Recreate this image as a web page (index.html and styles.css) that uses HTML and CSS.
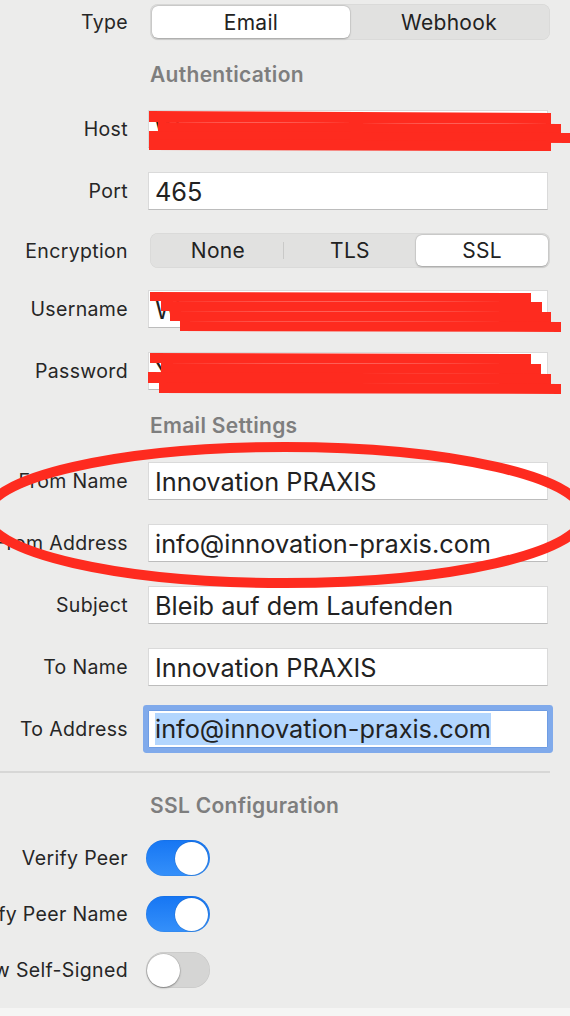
FILE: index.html
```html
<!DOCTYPE html>
<html lang="de">
<head>
<meta charset="utf-8">
<title>Email settings</title>
<link rel="stylesheet" href="styles.css">
</head>
<body>
<main class="panel">
  <section class="form">
    <div class="label">Type</div>
    <div class="seg seg-type">
      <span class="seg-item selected">Email</span>
      <span class="seg-item">Webhook</span>
    </div>

    <div class="section-title title-auth">Authentication</div>

    <div class="label">Host</div>
    <div class="field">W</div>

    <div class="label">Port</div>
    <div class="field">465</div>

    <div class="label row-enc">Encryption</div>
    <div class="seg seg-enc row-enc">
      <span class="seg-item sep-after">None</span>
      <span class="seg-item">TLS</span>
      <span class="seg-item selected">SSL</span>
    </div>

    <div class="label">Username</div>
    <div class="field">W</div>

    <div class="label">Password</div>
    <div class="field">Y</div>

    <div class="section-title title-email">Email Settings</div>

    <div class="label">From Name</div>
    <div class="field">Innovation PRAXIS</div>

    <div class="label">From Address</div>
    <div class="field">info@innovation-praxis.com</div>

    <div class="label">Subject</div>
    <div class="field">Bleib auf dem Laufenden</div>

    <div class="label">To Name</div>
    <div class="field">Innovation PRAXIS</div>

    <div class="label">To Address</div>
    <div class="field focused"><span class="selection">info@innovation-praxis.com</span></div>
  </section>

  <hr class="divider">

  <section class="form ssl">
    <div class="section-title title-ssl">SSL Configuration</div>

    <div class="label">Verify Peer</div>
    <div class="toggle on"><span class="knob"></span></div>

    <div class="label">Verify Peer Name</div>
    <div class="toggle on"><span class="knob"></span></div>

    <div class="label">Allow Self-Signed</div>
    <div class="toggle"><span class="knob"></span></div>
  </section>
</main>
<footer class="strip"></footer>

<svg class="marks" width="570" height="1016" viewBox="0 0 570 1016" aria-hidden="true">
  <g fill="#fe2b1f">
    <polygon points="149,111 551,113 551,124 149,122"/>
    <polygon points="158,122 561,124 561,134 158,132"/>
    <polygon points="149,131 570,133 570,143 149,141"/>
    <polygon points="149,139 551,141 551,151 149,150"/>

    <polygon points="150,292 531,293 531,302 150,301"/>
    <polygon points="161,301 542,302 542,312 161,311"/>
    <polygon points="170,311 551,312 551,322 170,321"/>
    <polygon points="180,321 561,322 561,332 180,331"/>

    <polygon points="150,353 531,354 531,364 150,363"/>
    <polygon points="161,363 541,364 541,374 161,373"/>
    <polygon points="148,372 551,374 551,384 148,383"/>
    <polygon points="159,382 561,384 561,394 159,393"/>
  </g>
  <ellipse cx="285" cy="515" rx="299" ry="68" fill="none" stroke="#fe2b1f" stroke-width="10"/>
</svg>
</body>
</html>
```

FILE: styles.css
```css
html, body {
  margin: 0;
  padding: 0;
}

body {
  width: 570px;
  height: 1016px;
  overflow: hidden;
  position: relative;
  background: #ececeb;
  font-family: Inter, "Noto Sans", sans-serif;
  color: #262626;
}

.panel {
  padding-top: 4px;
}

.form {
  display: grid;
  grid-template-columns: 128px 400px;
  column-gap: 20px;
  row-gap: 24px;
  align-items: center;
}

.label {
  display: flex;
  justify-content: flex-end;
  white-space: nowrap;
  font-size: 19.5px;
  letter-spacing: 0.35px;
  color: #262626;
}

.section-title {
  grid-column: 2;
  margin-left: 2px;
  font-size: 21px;
  font-weight: 600;
  letter-spacing: 0.3px;
  color: #7e7e7e;
  line-height: 22px;
}

.title-email {
  line-height: 24px;
}

.seg {
  display: flex;
  margin-left: 2px;
  width: 400px;
  height: 36px;
  box-sizing: border-box;
  padding: 2px;
  border-radius: 8px;
  background: #e1e1e0;
  box-shadow: inset 0 0 0 0.5px rgba(0, 0, 0, 0.06);
}

.seg-enc {
  height: 35px;
}

.row-enc {
  margin-top: -1px;
  margin-bottom: -2px;
}

.seg-item {
  flex: 1;
  position: relative;
  display: flex;
  align-items: center;
  justify-content: center;
  font-size: 21px;
  letter-spacing: 0.3px;
  color: #222;
  border-radius: 6px;
}

.seg-item.selected {
  background: #fff;
  box-shadow: 0 0.5px 2px rgba(0, 0, 0, 0.25), 0 0 0 0.5px rgba(0, 0, 0, 0.08);
}

.seg-item.sep-after::after {
  content: "";
  position: absolute;
  right: 0;
  top: 7px;
  bottom: 7px;
  width: 1px;
  background: #c9c9c8;
}

.field {
  height: 38px;
  box-sizing: border-box;
  background: #fff;
  border: 1px solid #dadada;
  border-bottom-color: #bcbcbc;
  padding: 0 6px;
  display: flex;
  align-items: center;
  font-size: 25.3px;
  color: #222;
  white-space: nowrap;
  overflow: hidden;
}

.field.focused {
  border-color: #6f9de3;
  border-radius: 1px;
  box-shadow: 0 0 0 5px #80aaeb;
}

.selection {
  background: #b3d6fe;
  line-height: 32px;
  display: inline-block;
}

.divider {
  margin: 23px 0 0;
  width: 550px;
  height: 0;
  border: 0;
  border-top: 2px solid #d7d7d6;
}

.ssl {
  margin-top: 22px;
  row-gap: 20px;
}

.title-ssl {
  margin-bottom: 3px;
}

.toggle {
  position: relative;
  width: 64px;
  height: 36px;
  margin-left: -2px;
  border-radius: 18px;
  background: #d5d5d4;
  box-shadow: inset 0 0 0 0.5px rgba(0, 0, 0, 0.08);
}

.toggle.on {
  background: linear-gradient(180deg, #1676f3 0%, #3590fa 100%);
}

.knob {
  position: absolute;
  top: 1.5px;
  left: 1px;
  width: 33px;
  height: 33px;
  border-radius: 50%;
  background: #fff;
  box-shadow: 0 1px 2px rgba(0, 0, 0, 0.35), 0 0 0 0.5px rgba(0, 0, 0, 0.12);
}

.toggle.on .knob {
  left: auto;
  right: 2px;
  box-shadow: 0 0 0 0.5px rgba(0, 0, 0, 0.15);
}

.strip {
  position: absolute;
  left: 0;
  right: 0;
  top: 1008px;
  bottom: 0;
  background: #f5f5f4;
}

.marks {
  position: absolute;
  left: 0;
  top: 0;
  pointer-events: none;
}
```
